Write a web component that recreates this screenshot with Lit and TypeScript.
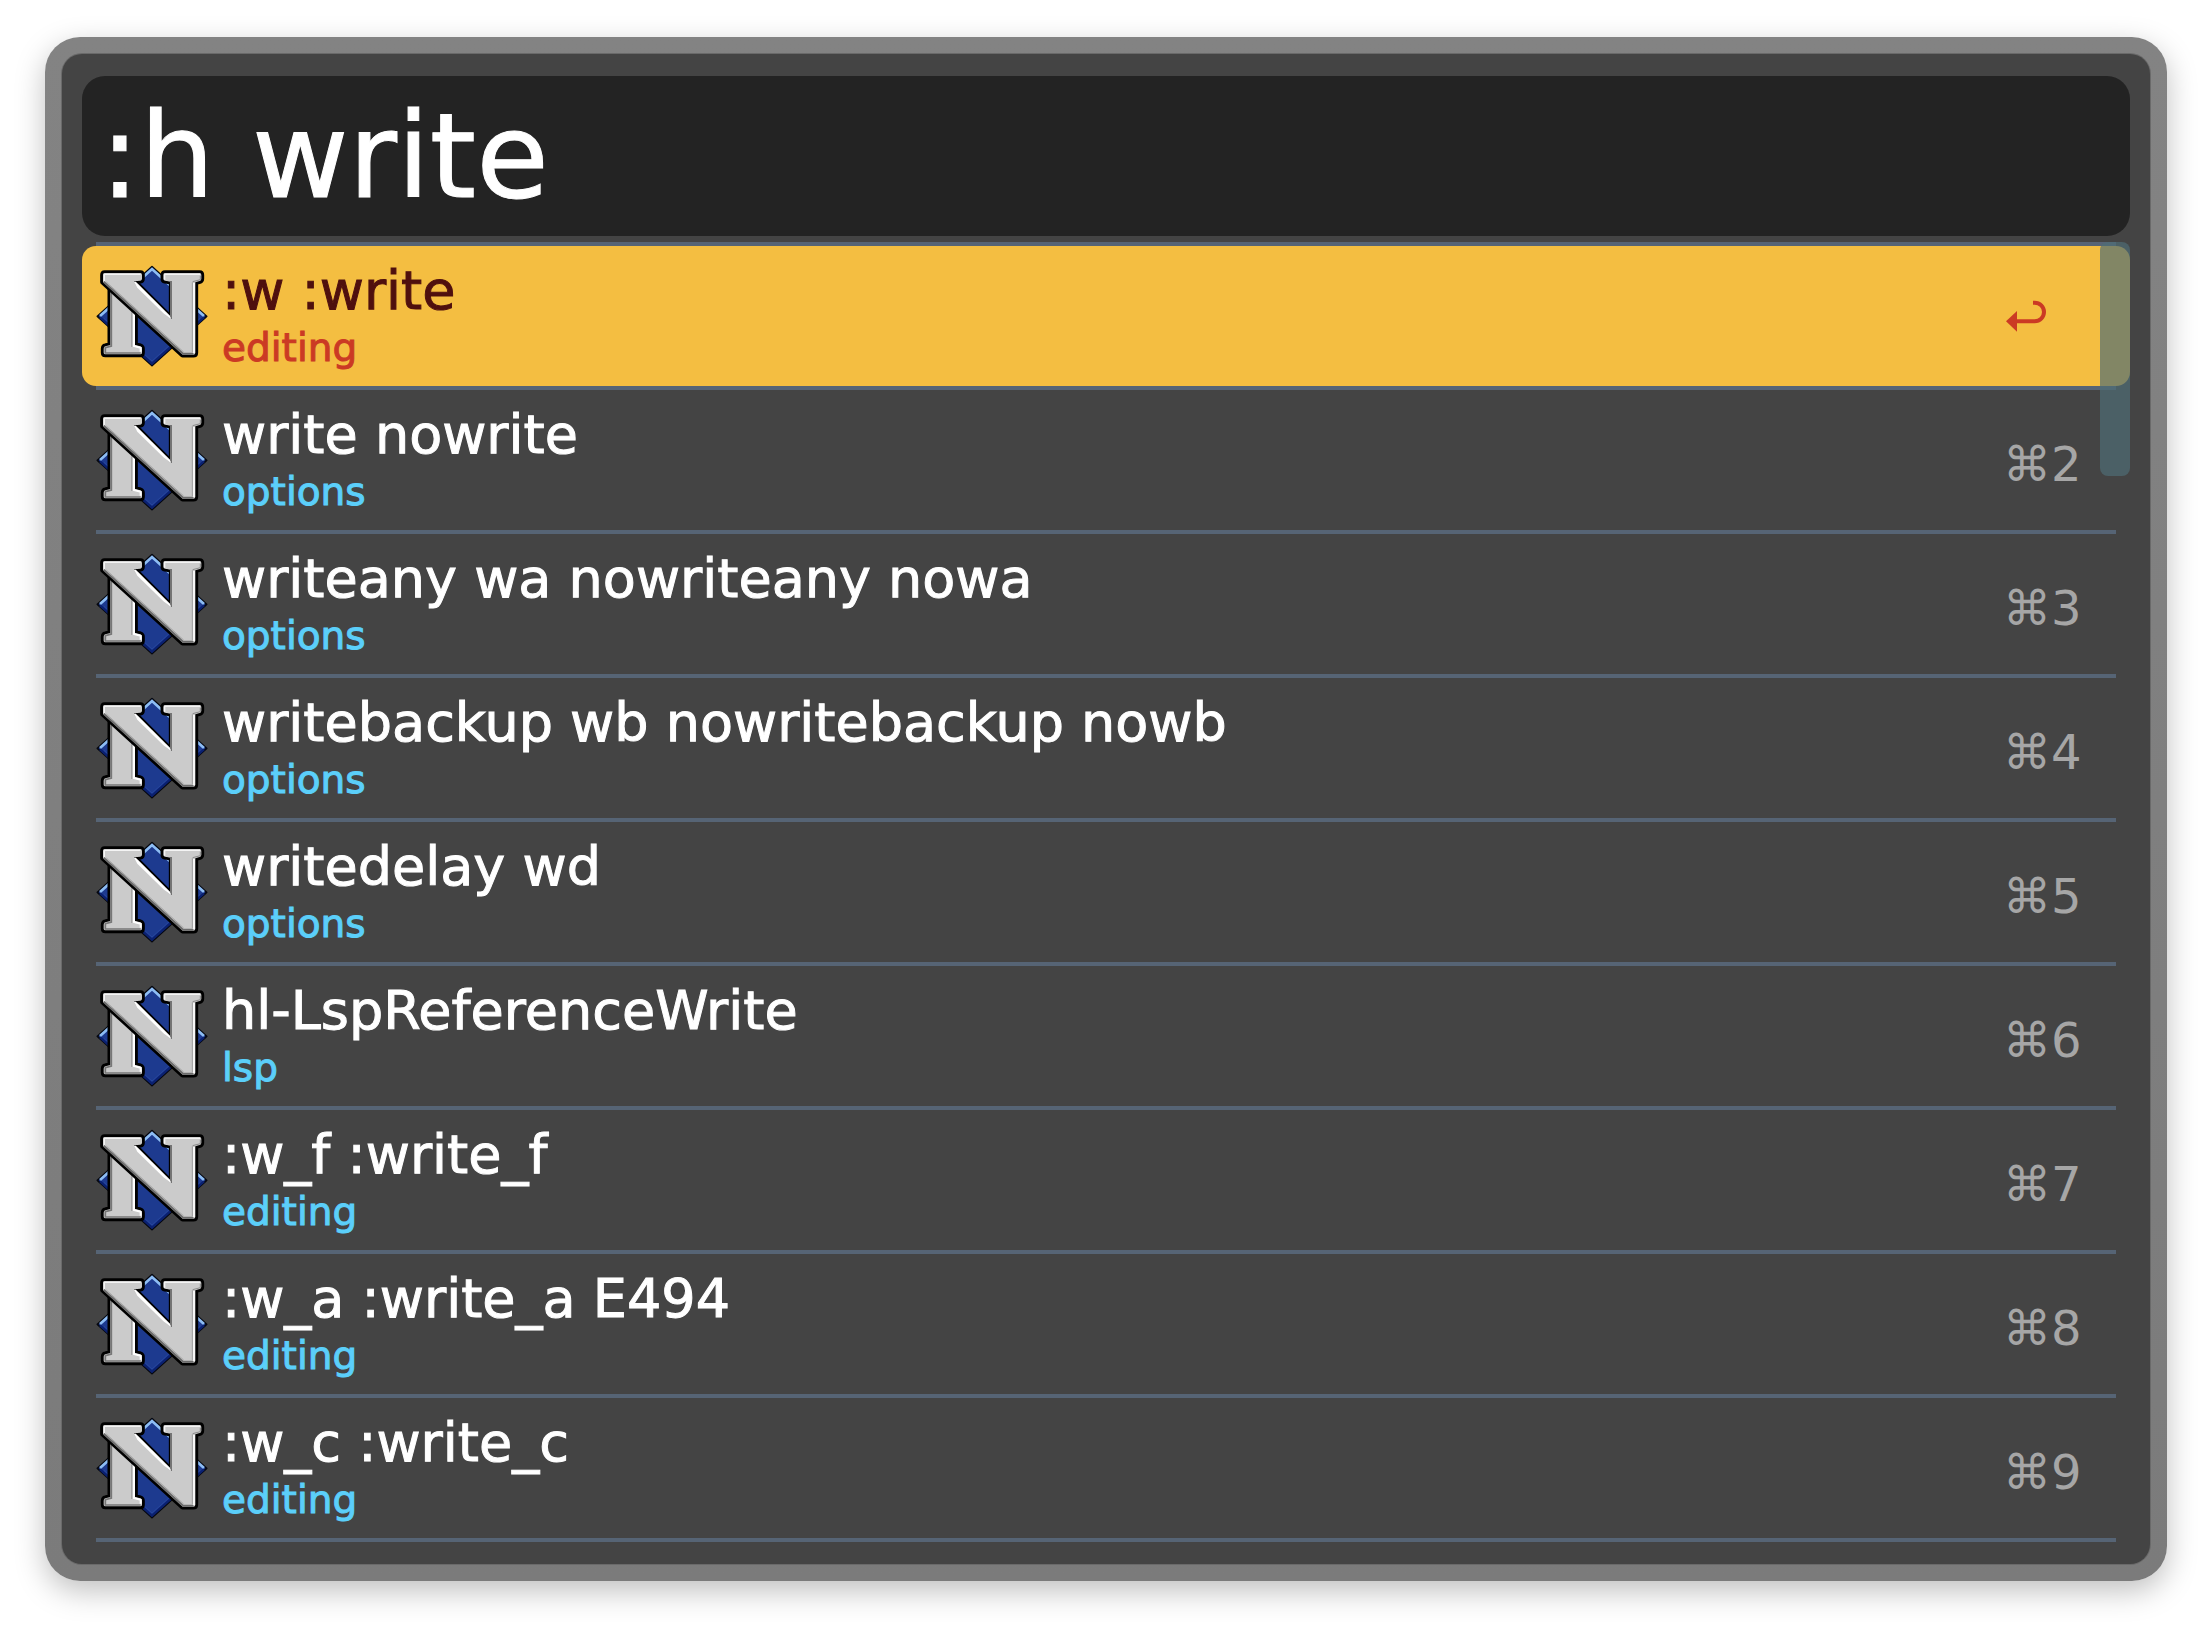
import { LitElement, html, css, svg } from "lit";
import { customElement, property, state } from "lit/decorators.js";
import { classMap } from "lit/directives/class-map.js";

interface Result {
  title: string;
  topic: string;
}

const RESULTS: Result[] = [
  { title: ":w :write", topic: "editing" },
  { title: "write nowrite", topic: "options" },
  { title: "writeany wa nowriteany nowa", topic: "options" },
  { title: "writebackup wb nowritebackup nowb", topic: "options" },
  { title: "writedelay wd", topic: "options" },
  { title: "hl-LspReferenceWrite", topic: "lsp" },
  { title: ":w_f :write_f", topic: "editing" },
  { title: ":w_a :write_a E494", topic: "editing" },
  { title: ":w_c :write_c", topic: "editing" },
];

const STEM = "M91 118L165 184V284L181 288Q186 290 186 295V307Q186 312 181 312H76Q71 312 71 307V295Q71 289 76 288L91 284Z";
const DIAGONAL =
  "M74 68H181Q186 68 186 74V85Q186 90 181 91L162 93L275 206V94L255 91Q250 90 250 85V74Q250 68 255 68H359Q364 68 364 74V85Q364 90 359 92L346 96V307Q346 313 340 313H308L69 95V74Q69 68 74 68Z";

const neovimLogo = svg`
  <path d="M216 49L380 198L216 346L52 198Z" fill="#1d3a8f" stroke="#05070f" stroke-width="5" stroke-linejoin="round"/>
  <path d="M60 197L216 56L372 197" fill="none" stroke="#8dbdf4" stroke-width="8"/>
  <path d="M60 201L216 340L372 201" fill="none" stroke="#0a2070" stroke-width="7"/>
  <path d="M72 204L216 332L360 204" fill="none" stroke="#2b4ba6" stroke-width="2"/>
  <path d=${STEM} fill="#000" stroke="#000" stroke-width="17" stroke-linejoin="round"/>
  <path d=${STEM} fill="#cbcbcb"/>
  <path d="M94 120V287L76 292V308H182" fill="none" stroke="#777" stroke-width="5"/>
  <path d="M162 182V287L182 292V304" fill="none" stroke="#fff" stroke-width="6"/>
  <path d="M155 176V290" fill="none" stroke="#8a8a8a" stroke-width="2"/>
  <path d=${DIAGONAL} fill="#000" stroke="#000" stroke-width="17" stroke-linejoin="round"/>
  <path d=${DIAGONAL} fill="#cbcbcb"/>
  <path d="M73 92V72H182" fill="none" stroke="#f4f4f4" stroke-width="4"/>
  <path d="M254 88V72H360" fill="none" stroke="#f4f4f4" stroke-width="4"/>
  <path d="M71 94L309 310H340" fill="none" stroke="#6c6c6c" stroke-width="6"/>
  <path d="M79 95L311 305" fill="none" stroke="#a6a6a6" stroke-width="3"/>
  <path d="M162 93L275 206L252 190L172 112Z" fill="#fff"/>
  <path d="M165 95L272 202" fill="none" stroke="#fff" stroke-width="5"/>
  <path d="M264 92H276V206L270 198V96Z" fill="#747474"/>
  <path d="M342 98V308" fill="none" stroke="#fff" stroke-width="5"/>
  <path d="M337 96V305" fill="none" stroke="#8a8a8a" stroke-width="2"/>
  <path d="M338 94L361 88V76" fill="none" stroke="#8a8a8a" stroke-width="3"/>`;

@customElement("result-row")
class ResultRow extends LitElement {
  @property({ attribute: false }) result!: Result;
  @property({ type: Number }) position = 1;
  @property({ type: Boolean }) selected = false;

  static styles = css`
    :host {
      display: block;
    }
    .row {
      display: flex;
      align-items: center;
      gap: 14px;
      width: 100%;
      margin: 0;
      padding: 0 49px 0 14px;
      border: 0;
      border-radius: 14px;
      background: none;
      color: #fff;
      font: inherit;
      text-align: left;
    }
    .row.selected {
      background: #f4be41;
      color: #4f100e;
    }
    .logo {
      flex: none;
      width: 112px;
      height: 102px;
    }
    .text {
      flex: 1;
      min-width: 0;
      padding: 15px 0 11px;
      -webkit-text-stroke: 1px currentColor;
    }
    .title,
    .topic {
      display: block;
    }
    .title {
      font-size: 54px;
      line-height: 60px;
    }
    .topic {
      color: #5bcffa;
      font-size: 39px;
      line-height: 54px;
    }
    .selected .topic,
    .selected .shortcut {
      color: #cb3a24;
    }
    .shortcut {
      flex: none;
      width: 78px;
      color: #a6a6a6;
      font-size: 48px;
      line-height: 60px;
      white-space: nowrap;
    }
    .keys {
      display: block;
      padding-top: 8px;
    }
    .return {
      display: block;
      width: 40px;
      height: 32px;
      margin-left: 3px;
    }
  `;

  render() {
    return html`
      <button class=${classMap({ row: true, selected: this.selected })} type="button">
        <svg class="logo" viewBox="48 44 336 306" aria-hidden="true">${neovimLogo}</svg>
        <span class="text">
          <span class="title">${this.result.title}</span>
          <span class="topic">${this.result.topic}</span>
        </span>
        <span class="shortcut">
          ${this.selected
            ? html`<svg class="return" viewBox="138 843 120 96" aria-hidden="true">
                <path d="M138 907L171 876V938Z" fill="currentColor" />
                <path d="M219 851H224A28 28 0 0 1 224 907H168" fill="none" stroke="currentColor" stroke-width="12" />
              </svg>`
            : html`<span class="keys">⌘${this.position}</span>`}
        </span>
      </button>
    `;
  }
}

@customElement("app-root")
class AppRoot extends LitElement {
  @state() private selectedIndex = 0;

  static styles = css`
    :host {
      display: block;
      padding: 37px 45px 53px;
      background: #fff;
      font-family: "DejaVu Sans", sans-serif;
    }
    .window {
      padding: 17px;
      border-radius: 35px;
      background: linear-gradient(#838383, #7b7b7b);
      box-shadow: 0 10px 30px rgba(0, 0, 0, 0.25);
    }
    .panel {
      padding: 22px 20px;
      border-radius: 20px;
      background: #444;
      box-shadow: 0 0 0 1px #6a6a6a;
    }
    .search {
      display: block;
      box-sizing: border-box;
      width: 100%;
      height: 160px;
      padding: 0 18px;
      border: 0;
      border-radius: 23px;
      outline: none;
      background: #232323;
      color: #fff;
      font: 118px "DejaVu Sans", sans-serif;
      -webkit-text-stroke: 1px currentColor;
    }
    .results {
      position: relative;
      margin-top: 6px;
    }
    .list {
      margin: 0;
      padding: 0;
      list-style: none;
    }
    .item::after,
    .item:first-child::before {
      content: "";
      display: block;
      height: 4px;
      margin: 0 14px;
      background: #566475;
    }
    .thumb {
      position: absolute;
      top: 0;
      right: 0;
      width: 30px;
      height: 234px;
      border-radius: 8px;
      background: rgba(78, 108, 117, 0.69);
      pointer-events: none;
    }
  `;

  render() {
    return html`
      <main class="window">
        <div class="panel">
          <input class="search" type="text" aria-label="Search" spellcheck="false" .value=${":h write"} />
          <div class="results">
            <ul class="list">
              ${RESULTS.map(
                (result, index) => html`<li class="item">
                  <result-row
                    .result=${result}
                    .position=${index + 1}
                    .selected=${index === this.selectedIndex}
                    @click=${() => (this.selectedIndex = index)}
                  ></result-row>
                </li>`
              )}
            </ul>
            <div class="thumb"></div>
          </div>
        </div>
      </main>
    `;
  }
}
